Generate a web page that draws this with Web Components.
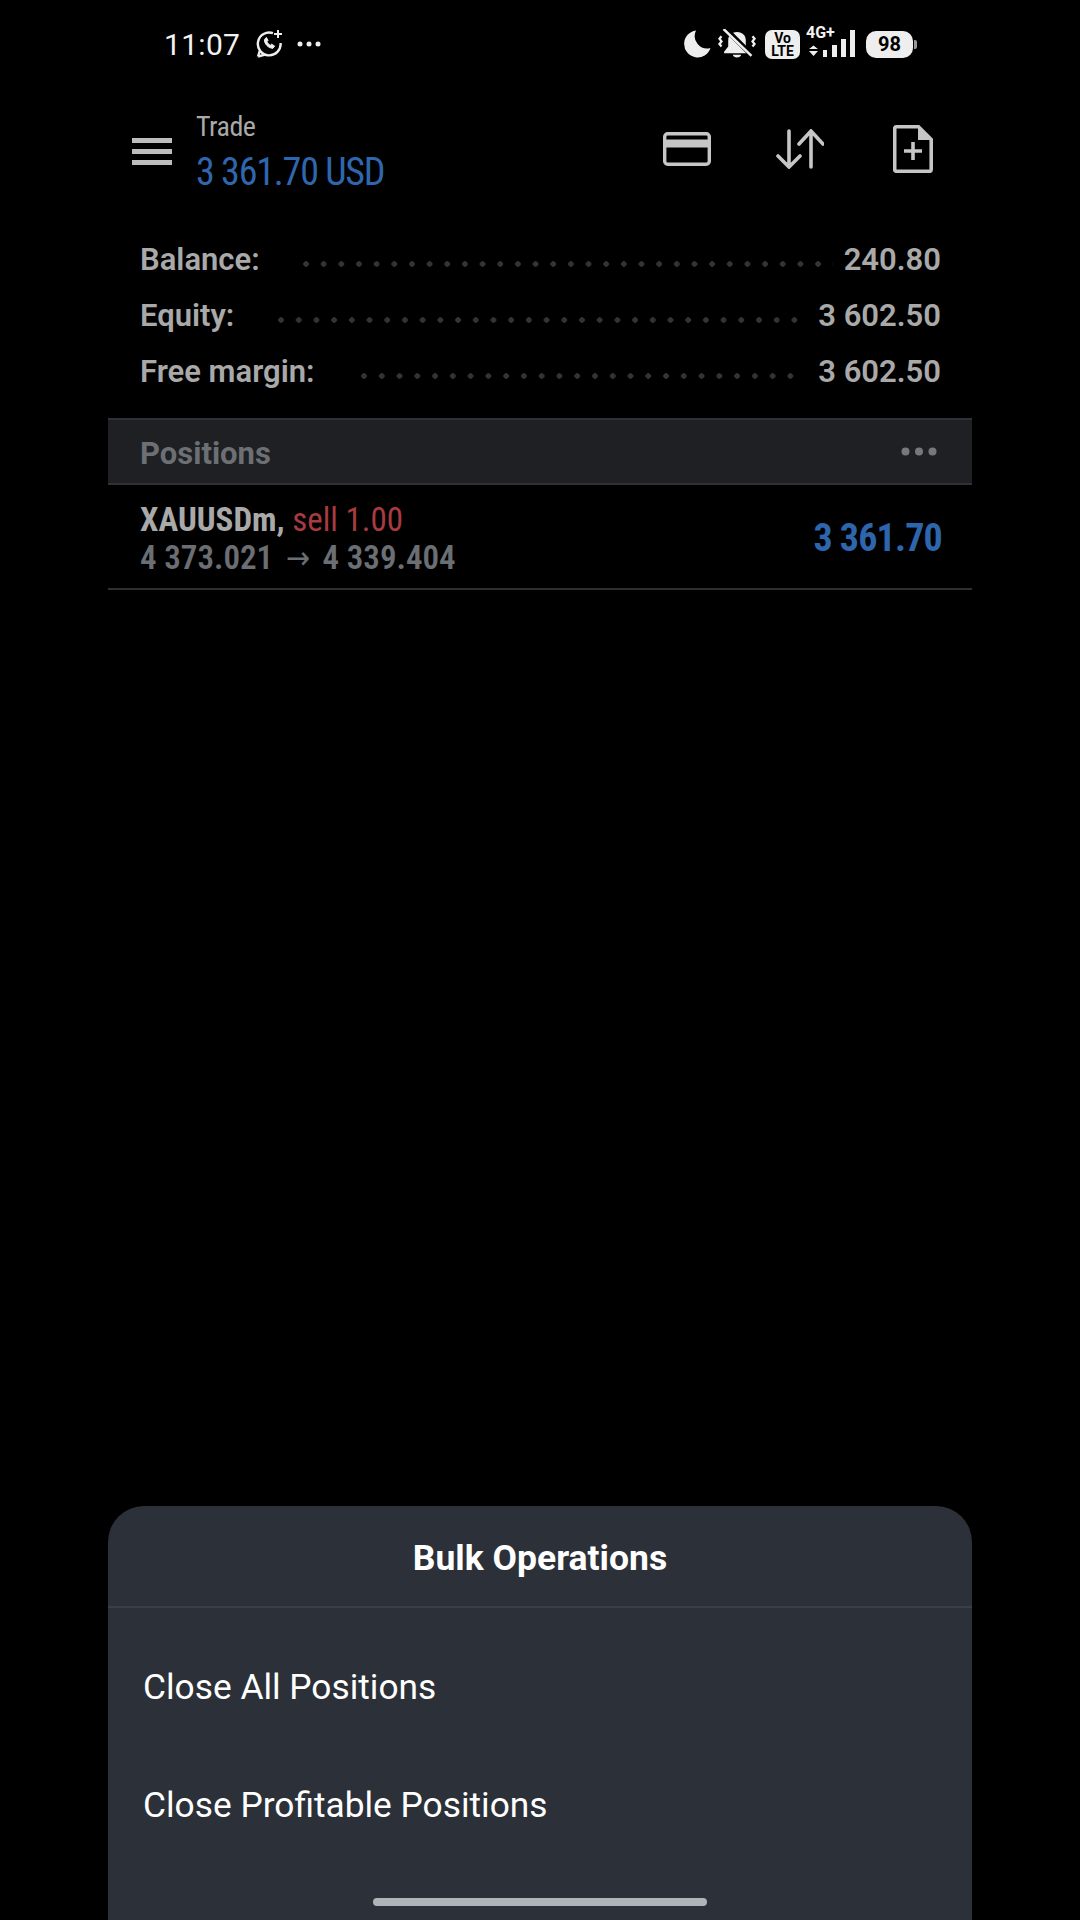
<!DOCTYPE html>
<html>
<head>
<meta charset="utf-8">
<style>
  html, body { margin: 0; background: #000; }
  body { width: 1080px; height: 1920px; overflow: hidden; display: flex; flex-direction: column; font-family: Roboto, "Liberation Sans", sans-serif; }
  .app { flex: 1; display: flex; flex-direction: column; margin: 0 108px; }
  .summary { display: block; padding: 17px 0 19px; }
  .spacer { flex: 1; }
</style>
</head>
<body>
<status-bar></status-bar>
<div class="app">
  <app-toolbar title="Trade" profit="3 361.70 USD"></app-toolbar>
  <div class="summary">
    <account-row label="Balance:" value="240.80" gap="43" end="11"></account-row>
    <account-row label="Equity:" value="3 602.50" gap="44" end="9"></account-row>
    <account-row label="Free margin:" value="3 602.50" gap="47" end="13"></account-row>
  </div>
  <section-header>Positions</section-header>
  <position-row symbol="XAUUSDm," side="sell 1.00" from="4 373.021" to="4 339.404" profit="3 361.70"></position-row>
  <div class="spacer"></div>
  <bulk-sheet heading="Bulk Operations">
    <sheet-item>Close All Positions</sheet-item>
    <sheet-item>Close Profitable Positions</sheet-item>
  </bulk-sheet>
</div>
<script>
class StatusBar extends HTMLElement {
  constructor() {
    super();
    this.attachShadow({ mode: "open" });
  }
  connectedCallback() {
    this.shadowRoot.innerHTML = `
    <style>
      :host { display: flex; align-items: center; height: 88px; padding: 0 163px 0 164px; color: #f2f2f2; }
      .time { font-size: 30px; font-weight: 400; width: 92px; letter-spacing: .3px; }
      svg { display: block; }
      .right { margin-left: auto; display: flex; align-items: center; }
      .volte { width: 35px; height: 29px; margin-left: 9px; border-radius: 7px; background: #eee; color: #000; font-size: 14px; line-height: 13px; font-weight: 700; text-align: center; padding-top: 2px; box-sizing: border-box; }
      .net { position: relative; width: 50px; height: 28px; margin-left: 5px; }
      .net span { position: absolute; left: 1px; top: -5px; font-size: 16px; font-weight: 700; line-height: 16px; }
      .net svg { position: absolute; left: 0; top: 0; }
      .batt { position: relative; width: 47px; height: 27px; margin-left: 11px; margin-right: 4px; border-radius: 10px; background: #eee; color: #000; font-size: 20px; font-weight: 700; line-height: 27px; text-align: center; }
      .batt::after { content: ""; position: absolute; right: -4px; top: 9px; width: 3px; height: 9px; border-radius: 0 2px 2px 0; background: #999; }
    </style>
    <span class="time">11:07</span>
    <svg width="27" height="28" viewBox="0 0 27 28" fill="none" stroke="#eee" stroke-width="2.4">
      <path d="M17 3.2A11.4 11.4 0 1 0 24.6 13M2 26.5l2-6.5M2 26.5l7-1.9"/>
      <path d="M8.5 9.5c-.6 4 4 9 8.500 8.800l1.600-2.300-3-1.800-1.300 1c-1.500-.7-2.700-2-3.300-3.500l1-1.300-1.600-3z" fill="#eee" stroke-width="1"/>
      <path d="M22 0v8M18 4h8" stroke-width="2"/>
    </svg>
    <svg style="margin-left:14px" width="24" height="6" viewBox="0 0 24 6" fill="#eee"><circle cx="3" cy="3" r="2.500"/><circle cx="12" cy="3" r="2.500"/><circle cx="21" cy="3" r="2.500"/></svg>
    <div class="right">
      <svg style="margin-right:1px" width="28" height="28" viewBox="0 0 28 28" fill="#eee"><path d="M13 0.500A13.500 13.500 0 1 0 27.500 18 12.500 12.500 0 0 1 13 0.500z"/></svg>
      <svg style="margin-left:6px" width="38" height="31" viewBox="0 0 36 30" fill="#eee">
        <path d="M18 3c-5.500 0-8.500 3.500-8.500 8v6l-4 5v1.500h25V22l-4-5v-6c0-4.500-3-8-8.500-8zM14 25h8c-.5 3.500-7.500 3.500-8 0z"/>
        <path d="M7 0l27 27" stroke="#000" stroke-width="5"/>
        <path d="M5 0l27 26" stroke="#eee" stroke-width="2.400"/>
        <path d="M3 7l-2 2.500L3 12l-2 2.500 2 2.500M33 7l2 2.500L33 12l2 2.500-2 2.500" fill="none" stroke="#eee" stroke-width="2.200"/>
      </svg>
      <div class="volte">Vo<br>LTE</div>
      <div class="net">
        <span>4G+</span>
        <svg width="50" height="28" viewBox="0 0 50 28" fill="#eee">
          <path d="M4 19h9l-4.500-3.500zM4 21h9l-4.500 5zM18 20h4v7h-4zM27 15h5v12h-5zM36 9h5v18h-5z"/>
          <path d="M45 0h5v27h-5z"/>
        </svg>
      </div>
      <div class="batt">98</div>
    </div>`;
  }
}

class AppToolbar extends HTMLElement {
  constructor() {
    super();
    this.attachShadow({ mode: "open" });
  }
  connectedCallback() {
    this.shadowRoot.innerHTML = `
    <style>
      :host { display: flex; align-items: center; height: 126px; padding: 0 39px 0 24px; }
      svg { display: block; }
      .titles { margin-left: 24px; display: flex; flex-direction: column; font-stretch: 75%; padding-top: 8px; }
      .title { font-size: 28px; line-height: 32px; color: #a9a9a9; letter-spacing: -.5px; margin-top: -4px; margin-bottom: 5px; }
      .profit { font-size: 38px; line-height: 48px; color: #2f67ae; letter-spacing: -1.2px; }
      .actions { margin-left: auto; display: flex; align-items: center; margin-top: -5px; }
    </style>
    <svg width="40" height="27" viewBox="0 0 40 27" fill="#bdbdbd"><path d="M0 0h40v5H0zM0 11h40v5H0zM0 22h40v5H0z"/></svg>
    <div class="titles">
      <span class="title">${this.getAttribute("title")}</span>
      <span class="profit">${this.getAttribute("profit")}</span>
    </div>
    <div class="actions">
      <svg width="48" height="34" viewBox="0 0 48 34" fill="none" stroke="#c6c6c6" stroke-width="3.400">
        <rect x="1.700" y="1.700" width="44.600" height="30.600" rx="3"/>
        <path d="M2 11.500h44" stroke-width="8"/>
      </svg>
      <svg style="margin-left:65px" width="48" height="40" viewBox="0 0 48 40" fill="none" stroke="#c6c6c6" stroke-width="3.600" stroke-linecap="round">
        <path d="M13 2v36M2 27l11 11 11-11"/>
        <path d="M35 38V2M23 15L35 2l12 13"/>
      </svg>
      <svg style="margin-left:69px" width="40" height="48" viewBox="0 0 40 48" fill="none" stroke="#c6c6c6" stroke-width="3.600">
        <path d="M3.500 1.800h22l12.700 12.700v30c0 1-.8 1.800-1.800 1.800H3.500c-1 0-1.800-.8-1.800-1.800v-41c0-1 .8-1.700 1.800-1.700z"/>
        <path d="M25 2l13 13h-13z" fill="#c6c6c6" stroke="none"/>
        <path d="M20 17v18M11 26h18"/>
      </svg>
    </div>`;
  }
}

class AccountRow extends HTMLElement {
  constructor() {
    super();
    this.attachShadow({ mode: "open" });
  }
  connectedCallback() {
    const gap = this.getAttribute("gap");
    const end = this.getAttribute("end");
    this.shadowRoot.innerHTML = `
    <style>
      :host { display: flex; align-items: center; height: 56px; padding: 0 31px 0 32px; color: #a9a9a9; font-size: 31px; font-weight: 600; }
      .dots { flex: 1; height: 6px; margin: 10px ${end}px 0 ${gap}px;
        background: radial-gradient(circle at 3px 3px, #343434 2.500px, transparent 3px) left center / 17.600px 6px repeat-x; background-repeat: space no-repeat; }
    </style>
    <span>${this.getAttribute("label")}</span>
    <div class="dots"></div>
    <span>${this.getAttribute("value")}</span>`;
  }
}

class SectionHeader extends HTMLElement {
  constructor() {
    super();
    this.attachShadow({ mode: "open" });
  }
  connectedCallback() {
    this.shadowRoot.innerHTML = `
    <style>
      :host { display: flex; align-items: center; justify-content: space-between; height: 67px; box-sizing: border-box; padding: 3px 35px 0 32px; background: #1f2023; border-top: 2px solid #303135; border-bottom: 2px solid #303135; color: #6c6f73; font-size: 31px; font-weight: 700; }
      svg { display: block; margin-top: -3px; }
    </style>
    <span><slot></slot></span>
    <svg width="36" height="9" viewBox="0 0 36 9" fill="#76787b"><circle cx="4.500" cy="4.500" r="4"/><circle cx="18" cy="4.500" r="4"/><circle cx="31.500" cy="4.500" r="4"/></svg>`;
  }
}

class PositionRow extends HTMLElement {
  constructor() {
    super();
    this.attachShadow({ mode: "open" });
  }
  connectedCallback() {
    this.shadowRoot.innerHTML = `
    <style>
      :host { display: flex; align-items: center; justify-content: space-between; height: 105px; box-sizing: border-box; padding: 0 30px 0 32px; border-bottom: 2px solid #2e2f31; font-stretch: 75%; }
      .info { display: flex; flex-direction: column; padding-top: 4px; }
      .top { font-size: 33px; line-height: 38px; font-weight: 700; color: #a9a9a9; }
      .side { font-weight: 400; color: #a93b40; }
      .prices { font-size: 33px; line-height: 38px; font-weight: 600; color: #6b6e73; }
      .arrow { font-family: "DejaVu Sans", sans-serif; font-size: 32px; font-weight: 400; margin: 0 5px; line-height: 30px; }
      .profit { font-size: 38px; font-weight: 700; color: #2d66ad; letter-spacing: -.8px; padding-top: 2px; }
    </style>
    <div class="info">
      <span class="top">${this.getAttribute("symbol")} <span class="side">${this.getAttribute("side")}</span></span>
      <span class="prices">${this.getAttribute("from")} <span class="arrow">→</span> ${this.getAttribute("to")}</span>
    </div>
    <span class="profit">${this.getAttribute("profit")}</span>`;
  }
}

class BulkSheet extends HTMLElement {
  constructor() {
    super();
    this.attachShadow({ mode: "open" });
  }
  connectedCallback() {
    this.shadowRoot.innerHTML = `
    <style>
      :host { display: block; position: relative; height: 414px; box-sizing: border-box; background: #2c3038; border-radius: 36px 36px 0 0; color: #fff; }
      .head { height: 102px; box-sizing: border-box; border-bottom: 2px solid #3a3e46; display: flex; align-items: center; justify-content: center; font-size: 35.500px; font-weight: 700; padding-top: 4px; }
      .items { padding-top: 20px; }
      .home { position: absolute; left: 265px; top: 392px; width: 334px; height: 8px; border-radius: 4px; background: #b0b4b8; }
    </style>
    <div class="head">${this.getAttribute("heading")}</div>
    <div class="items"><slot></slot></div>
    <div class="home"></div>`;
  }
}

class SheetItem extends HTMLElement {
  constructor() {
    super();
    this.attachShadow({ mode: "open" });
  }
  connectedCallback() {
    this.shadowRoot.innerHTML = `
    <style>
      :host { display: flex; align-items: center; height: 118px; padding-left: 35px; font-size: 35.300px; font-weight: 400; color: #fff; }
    </style>
    <slot></slot>`;
  }
}

customElements.define("status-bar", StatusBar);
customElements.define("app-toolbar", AppToolbar);
customElements.define("account-row", AccountRow);
customElements.define("section-header", SectionHeader);
customElements.define("position-row", PositionRow);
customElements.define("bulk-sheet", BulkSheet);
customElements.define("sheet-item", SheetItem);
</script>
</body>
</html>
